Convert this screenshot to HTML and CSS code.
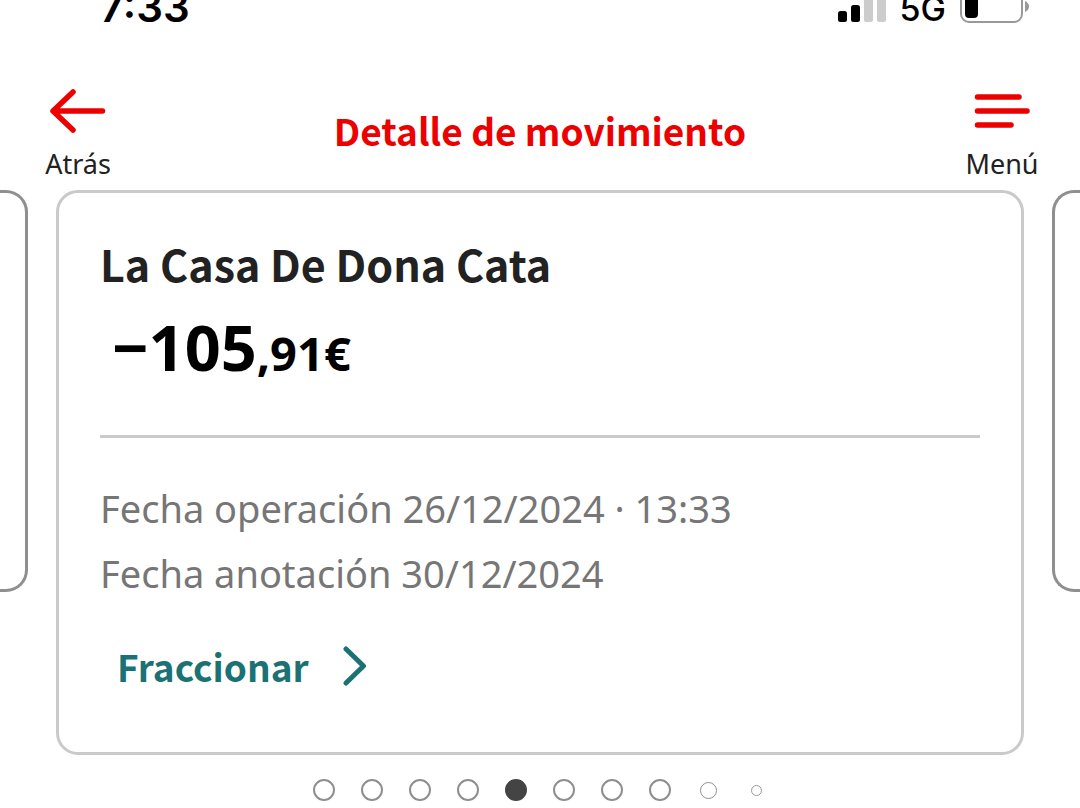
FILE: index.html
```html
<!DOCTYPE html>
<html lang="es">

<head>
    <meta charset="UTF-8">
    <meta name="viewport" content="width=device-width, initial-scale=1.0">
    <title>Detalle de movimiento</title>
    <link rel="stylesheet" href="styles.css">
</head>

<body>
    <!-- Status bar -->
    <div class="status-bar">
        <span class="status-time">7:33</span>
        <div class="status-icons">
            <svg class="signal" width="48" height="30" viewBox="0 0 48 30">
                <rect x="0" y="19" width="9" height="11" rx="2.5" fill="#000"/>
                <rect x="13" y="13" width="9" height="17" rx="2.5" fill="#000"/>
                <rect x="26" y="6" width="9" height="24" rx="2.5" fill="#ccc"/>
                <rect x="39" y="0" width="9" height="30" rx="2.5" fill="#ccc"/>
            </svg>
            <span class="network">5G</span>
            <svg class="battery" width="70" height="34" viewBox="0 0 70 34">
                <rect x="1" y="1" width="61" height="32" rx="8" fill="none" stroke="#999" stroke-width="2"/>
                <rect x="5" y="5" width="13" height="24" rx="4" fill="#000"/>
                <path d="M65 12 Q69 14 69 17.500 Q69 21 65 23 Z" fill="#999"/>
            </svg>
        </div>
    </div>

    <!-- Header -->
    <header>
        <button class="nav-btn" type="button">
            <svg width="56" height="46" viewBox="0 0 56 46" fill="none" stroke="#ec0000" stroke-width="5.500" stroke-linecap="round" stroke-linejoin="round">
                <path d="M23 4 L3 23 L23 42 M4 23 H52.500"/>
            </svg>
            Atrás
        </button>
        <h1>Detalle de movimiento</h1>
        <button class="nav-btn" type="button">
            <svg width="56" height="46" viewBox="0 0 56 46" fill="none" stroke="#ec0000" stroke-width="5.500" stroke-linecap="round">
                <path d="M3.500 9 H45 M3.500 23 H53 M3.500 37 H37"/>
            </svg>
            Menú
        </button>
    </header>

    <!-- Movement cards -->
    <main class="carousel">
        <div class="side-card side-prev"></div>
        <section class="card">
            <h2>La Casa De Dona Cata</h2>
            <p class="amount">−105<span class="cents">,91€</span></p>
            <hr>
            <p class="detail">Fecha operación 26/12/2024 · 13:33</p>
            <p class="detail">Fecha anotación 30/12/2024</p>
            <a class="action" href="#">
                Fraccionar
                <svg width="24" height="40" viewBox="0 0 24 40" fill="none" stroke="#1b7274" stroke-width="5" stroke-linecap="round" stroke-linejoin="round">
                    <path d="M3 3 L20.500 20 L3 37"/>
                </svg>
            </a>
        </section>
        <div class="side-card side-next"></div>
    </main>

    <!-- Pagination -->
    <nav class="dots">
        <button type="button" class="dot" aria-label="1"></button>
        <button type="button" class="dot" aria-label="2"></button>
        <button type="button" class="dot" aria-label="3"></button>
        <button type="button" class="dot" aria-label="4"></button>
        <button type="button" class="dot active" aria-label="5"></button>
        <button type="button" class="dot" aria-label="6"></button>
        <button type="button" class="dot" aria-label="7"></button>
        <button type="button" class="dot" aria-label="8"></button>
        <button type="button" class="dot medium" aria-label="9"></button>
        <button type="button" class="dot small" aria-label="10"></button>
    </nav>
</body>

</html>
```
FILE: styles.css
```css
* {
    box-sizing: border-box;
}

body {
    margin: 0;
    background-color: #fff;
    color: #222;
    font-family: 'Noto Sans', sans-serif;
    overflow: hidden;
}

button {
    padding: 0;
    border: none;
    background: none;
    font-family: inherit;
    color: inherit;
    cursor: pointer;
}

.status-bar {
    display: flex;
    justify-content: space-between;
    align-items: flex-end;
    height: 24px;
    padding: 0 50px 0 100px;
    overflow: hidden;
    font-family: 'Inter', sans-serif;
    color: #000;
}

.status-time {
    font-size: 42px;
    font-weight: 600;
    line-height: 34px;
}

.status-icons {
    display: flex;
    align-items: flex-end;
    gap: 14px;
}

.signal {
    margin-bottom: 2px;
}

.battery {
    margin-bottom: 1px;
}

.network {
    font-size: 34px;
    font-weight: 500;
    line-height: 30px;
}

header {
    display: flex;
    justify-content: space-between;
    align-items: flex-start;
    padding: 64px 40px 10px;
}

.nav-btn {
    display: flex;
    flex-direction: column;
    align-items: center;
    gap: 14px;
    width: 76px;
    font-size: 27px;
    line-height: 32px;
}

h1 {
    margin: 18px 0 0;
    color: #ec0000;
    font-family: 'Noto Sans CJK JP', 'Noto Sans', sans-serif;
    font-size: 37px;
    font-weight: 700;
    line-height: 48px;
}

.carousel {
    display: flex;
    align-items: flex-start;
    gap: 28px;
}

.side-card {
    flex: none;
    width: 28px;
    height: 402px;
    border: 3px solid #8f8f8f;
}

.side-prev {
    border-left: none;
    border-radius: 0 22px 22px 0;
}

.side-next {
    border-right: none;
    border-radius: 22px 0 0 22px;
}

.card {
    flex: 1;
    padding: 40px 41px 56px;
    border: 3px solid #cacaca;
    border-radius: 22px;
}

h2 {
    margin: 0;
    font-family: 'Noto Sans CJK JP', 'Noto Sans', sans-serif;
    font-size: 43px;
    font-weight: 700;
    line-height: 60px;
}

.amount {
    margin: 10px 0 0 12px;
    color: #000;
    font-size: 63px;
    font-weight: 700;
    line-height: 88px;
}

.cents {
    font-size: 47px;
}

hr {
    height: 3px;
    margin: 38px 0;
    border: none;
    background-color: #cacaca;
}

.detail {
    margin: 0;
    color: #767676;
    font-size: 38px;
    line-height: 65px;
}

.action {
    display: inline-flex;
    align-items: center;
    gap: 34px;
    margin: 30px 0 0 17px;
    color: #1b7274;
    font-family: 'Noto Sans CJK JP', 'Noto Sans', sans-serif;
    font-size: 37px;
    font-weight: 700;
    line-height: 60px;
    text-decoration: none;
}

.dots {
    display: grid;
    grid-template-columns: repeat(10, 48px);
    justify-content: center;
    align-items: center;
    justify-items: center;
    margin-top: 24px;
}

.dot {
    width: 22px;
    height: 22px;
    border: 2px solid #8f8f8f;
    border-radius: 50%;
}

.dot.active {
    border-color: #444;
    background-color: #444;
}

.dot.medium {
    width: 17px;
    height: 17px;
    border: 1px solid #8f8f8f;
}

.dot.small {
    width: 11px;
    height: 11px;
    border: 1px solid #999;
}
```
